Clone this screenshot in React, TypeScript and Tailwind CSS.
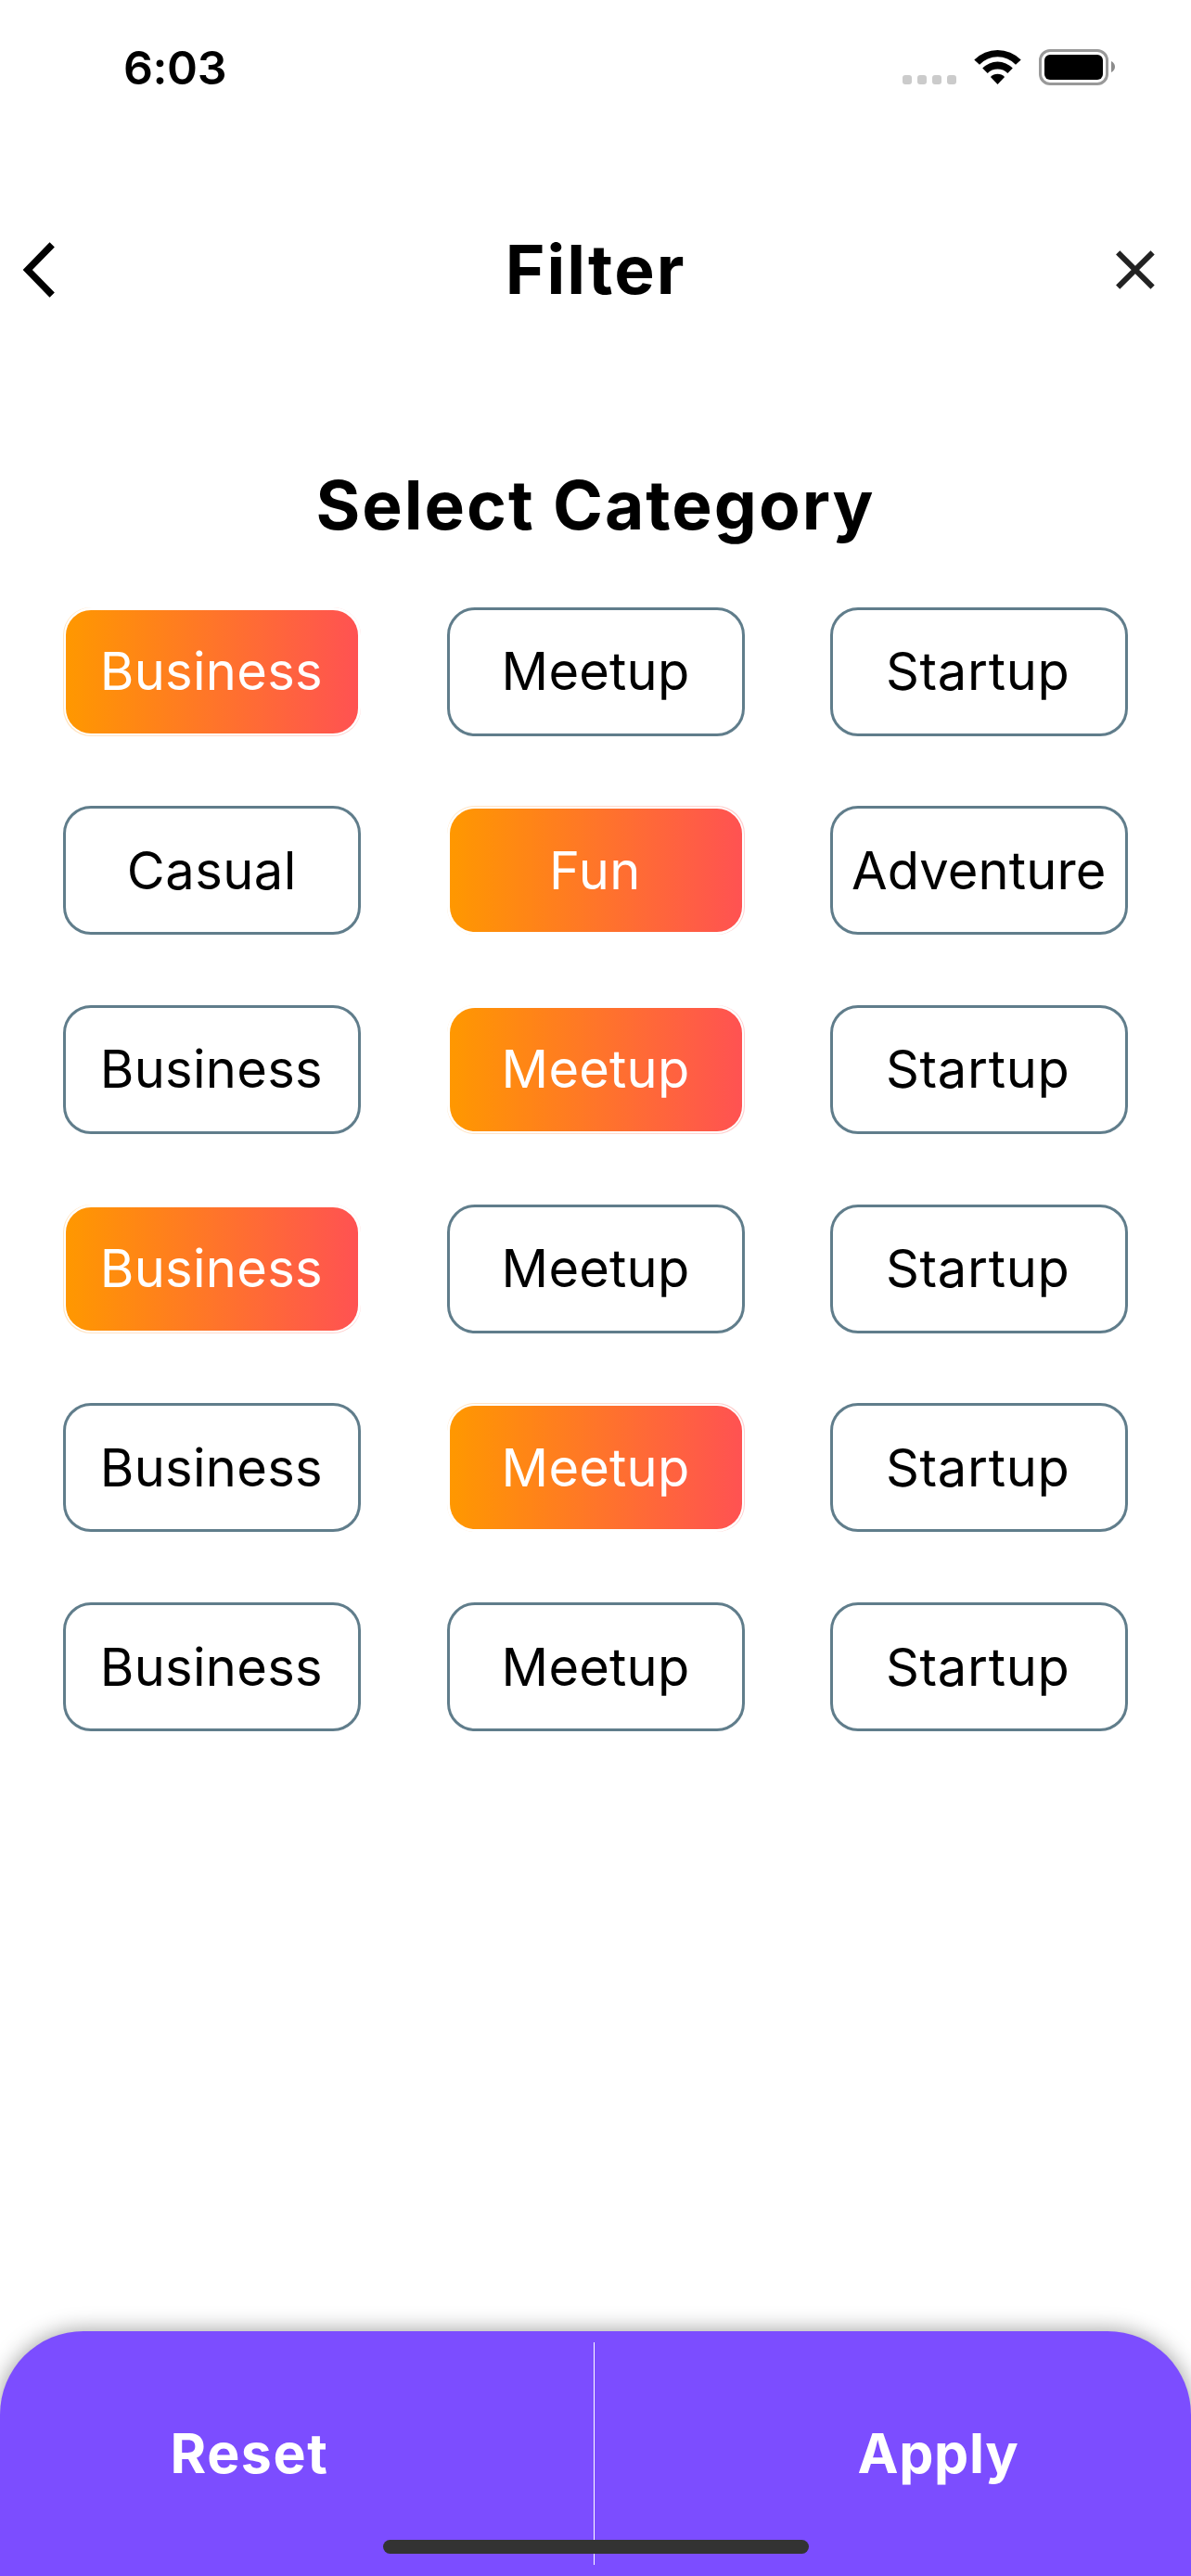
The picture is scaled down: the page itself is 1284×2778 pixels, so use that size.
type Category = { label: string; selected?: boolean };

const categories: Category[] = [
  { label: 'Business', selected: true },
  { label: 'Meetup' },
  { label: 'Startup' },
  { label: 'Casual' },
  { label: 'Fun', selected: true },
  { label: 'Adventure' },
  { label: 'Business' },
  { label: 'Meetup', selected: true },
  { label: 'Startup' },
  { label: 'Business', selected: true },
  { label: 'Meetup' },
  { label: 'Startup' },
  { label: 'Business' },
  { label: 'Meetup', selected: true },
  { label: 'Startup' },
  { label: 'Business' },
  { label: 'Meetup' },
  { label: 'Startup' },
];

const tracking: Record<string, string> = {
  Business: 'tracking-[0.3px] pr-[2px]',
  Meetup: 'tracking-[0.2px]',
  Startup: 'tracking-[0.7px] pr-[2px]',
  Casual: 'tracking-[0.5px] pr-[1px]',
  Fun: 'tracking-[0.5px] pr-[1px]',
  Adventure: 'tracking-[0.1px]',
};

function StatusBar() {
  return (
    <div className="flex h-[146px] shrink-0 items-start justify-between pl-[133px] pr-[82px]">
      <span className="mt-[43px] text-[50px] font-semibold leading-[60px] tracking-[-0.4px]">6:03</span>
      <div className="mt-[53px] flex items-start">
        <div className="mt-7 flex gap-1.5">
          {[0, 1, 2, 3].map((i) => (
            <span key={i} className="size-2.5 rounded-[3px] bg-[#cbcbcb]" />
          ))}
        </div>
        <svg className="ml-[19px] h-[39px] w-[51px]" viewBox="0 0 51 39">
          <path d="M.3 11.5a35.3 35.3 0 0 1 50.4 0l-5.7 5.2a27 27 0 0 0-39 0z" />
          <path d="M9.2 20.6a22.4 22.4 0 0 1 32.6 0l-5.5 5.4a15 15 0 0 0-21.6 0z" />
          <path d="M17.9 29.9a10.6 10.6 0 0 1 15.2 0L25.5 38z" />
        </svg>
        <div className="ml-[19px] h-[39px] w-[75px] rounded-[12px] border-[3px] border-[#999] p-[3px]">
          <div className="size-full rounded-[6px] bg-black" />
        </div>
        <svg className="ml-[3px] mt-[13px] h-3 w-1" viewBox="0 0 4 12">
          <path d="M0 0c2.4 1 4 3.4 4 6s-1.6 5-4 6z" fill="#8c8c8c" />
        </svg>
      </div>
    </div>
  );
}

function Header() {
  return (
    <header className="flex h-[290px] shrink-0 items-center justify-between pl-[20px] pr-[36px]">
      <button aria-label="Back">
        <svg className="h-[64px] w-[44px]" viewBox="0 0 44 64" fill="none" stroke="#000" strokeWidth="7.4">
          <path d="M36.2 4.8 9.8 32l26.4 27.2" />
        </svg>
      </button>
      <h1 className="ml-[20px] text-[73px] font-bold leading-[90px] tracking-[2px]">Filter</h1>
      <button aria-label="Close">
        <svg className="h-12 w-12" viewBox="0 0 48 48" fill="none" stroke="#222" strokeWidth="6">
          <path d="M5.2 5.4 42.6 42.6M42.6 5.4 5.2 42.6" />
        </svg>
      </button>
    </header>
  );
}

function Chip({ label, selected }: Category) {
  return (
    <button
      className={
        selected
          ? 'h-[139px] rounded-[30px] bg-linear-to-r/srgb from-[#ffe6c4] to-[#ffd0d0] p-[0.5px] text-white'
          : 'h-[139px] rounded-[30px] border-[3px] border-[#607d8b] bg-white text-black'
      }
    >
      {selected ? (
        <span className="flex size-full rounded-[30px] bg-white p-[2.5px]">
          <span className="flex size-full items-center justify-center rounded-[27px] bg-linear-to-r/srgb from-[#ff9800] to-[#ff5252]">
            <span className={tracking[label]}>{label}</span>
          </span>
        </span>
      ) : (
        <span className={tracking[label]}>{label}</span>
      )}
    </button>
  );
}

function Footer() {
  return (
    <footer className="relative mt-auto flex h-[264px] shrink-0 rounded-t-[90px] bg-[#7c4dff] text-[59px] font-bold leading-[72px] text-white shadow-[0_0_24px_rgba(0,0,0,0.4)]">
      <button className="flex w-[640px] justify-center pr-[102px] pt-[96px] tracking-[1.6px]">Reset</button>
      <div className="mt-3 h-60 w-px bg-white" />
      <button className="flex flex-1 justify-center pl-[98px] pt-[96px] tracking-[0.7px]">Apply</button>
      <div className="absolute bottom-6 left-[413px] h-[15px] w-[459px] rounded-full bg-[#333]" />
    </footer>
  );
}

export default function App() {
  return (
    <div className="flex h-[2778px] w-[1284px] flex-col overflow-hidden bg-white font-['Inter',sans-serif] text-black">
      <StatusBar />
      <Header />
      <main className="px-[68.3px]">
        <h2 className="mt-[64px] text-center text-[73px] font-bold leading-[90px] tracking-[2px]">
          Select Category
        </h2>
        <div className="mt-[64.6px] grid grid-cols-[321px_321px_321px] justify-between gap-y-[75.7px] text-[56px] leading-[68px]">
          {categories.map((c, i) => (
            <Chip key={i} {...c} />
          ))}
        </div>
      </main>
      <Footer />
    </div>
  );
}
